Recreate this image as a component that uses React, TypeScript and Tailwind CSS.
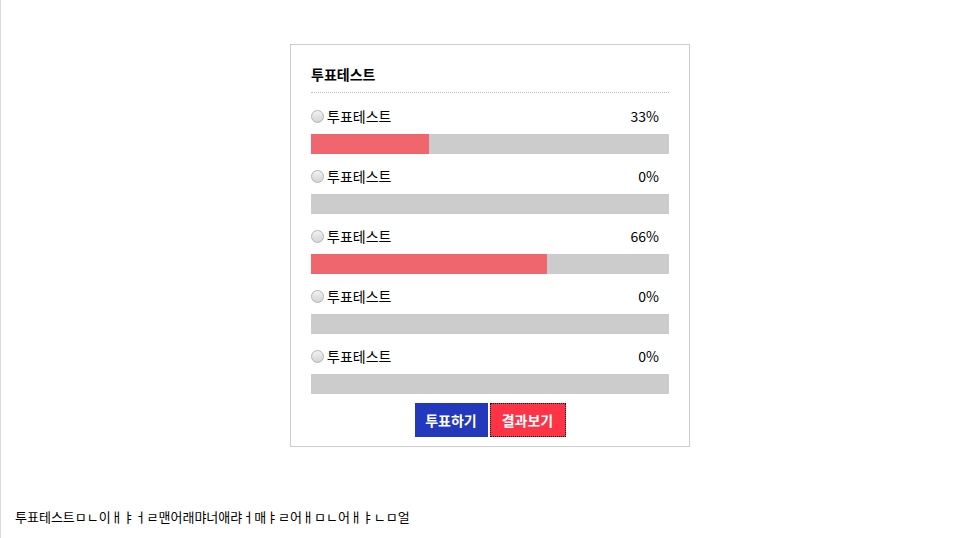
import React from "react";

// One poll option with its share of the votes
interface IOption {
  id: number;
  label: string;
  percent: number;
}

const options: IOption[] = [
  { id: 1, label: "투표테스트", percent: 33 },
  { id: 2, label: "투표테스트", percent: 0 },
  { id: 3, label: "투표테스트", percent: 66 },
  { id: 4, label: "투표테스트", percent: 0 },
  { id: 5, label: "투표테스트", percent: 0 },
];

function Radio() {
  // grey, unchecked radio like the old browser default
  return (
    <span className="inline-block w-[13px] h-[13px] rounded-full border border-[#b4b4b4] bg-gradient-to-b from-[#f2f2f2] to-[#d4d4d4] shrink-0" />
  );
}

function PollRow({ option }: { option: IOption }) {
  return (
    <div className="pt-[10px]">
      <div className="flex items-center h-[24px] text-[14px] text-black">
        <Radio />
        <span className="ml-[3px]">{option.label}</span>
        <span className="ml-auto pr-[10px]">{option.percent}%</span>
      </div>
      <div className="mt-[6px] h-[20px] bg-[#cccccc]">
        {/* bar width comes from the data */}
        <div className="h-full bg-[#f0666f]" style={{ width: `${option.percent}%` }} />
      </div>
    </div>
  );
}

export default function App() {
  return (
    <div
      className="min-h-[538px] border-l border-[#d9d9d9] bg-white"
      style={{ fontFamily: '"Noto Sans CJK KR", "Noto Sans", sans-serif' }}
    >
      <div className="pt-[44px]">
        <div className="ml-[289px] w-[400px] border border-[#cccccc] px-[20px] pt-[20px] pb-[9px]">
          <div className="mb-[1px] h-[28px] border-b border-dotted border-[#bbbbbb] text-[14px] font-bold leading-[19px] text-black">
            투표테스트
          </div>
          {options.map((o) => (
            <PollRow key={o.id} option={o} />
          ))}
          <div className="mt-[9px] flex justify-center gap-[2px]">
            <button className="h-[34px] w-[73px] bg-[#2239be] text-[14px] font-bold text-white">
              투표하기
            </button>
            <button className="h-[34px] w-[76px] bg-[#fe3446] text-[14px] font-bold text-white outline outline-1 outline-dotted outline-black -outline-offset-1">
              결과보기
            </button>
          </div>
        </div>
      </div>
      <div className="mt-[60px] pl-[14px] text-[13px] text-black">
        투표테스트ㅁㄴ이ㅐㅑㅓㄹ맨어래먀너애랴ㅓ매ㅑㄹ어ㅐㅁㄴ어ㅐㅑㄴㅁ얼
      </div>
    </div>
  );
}
